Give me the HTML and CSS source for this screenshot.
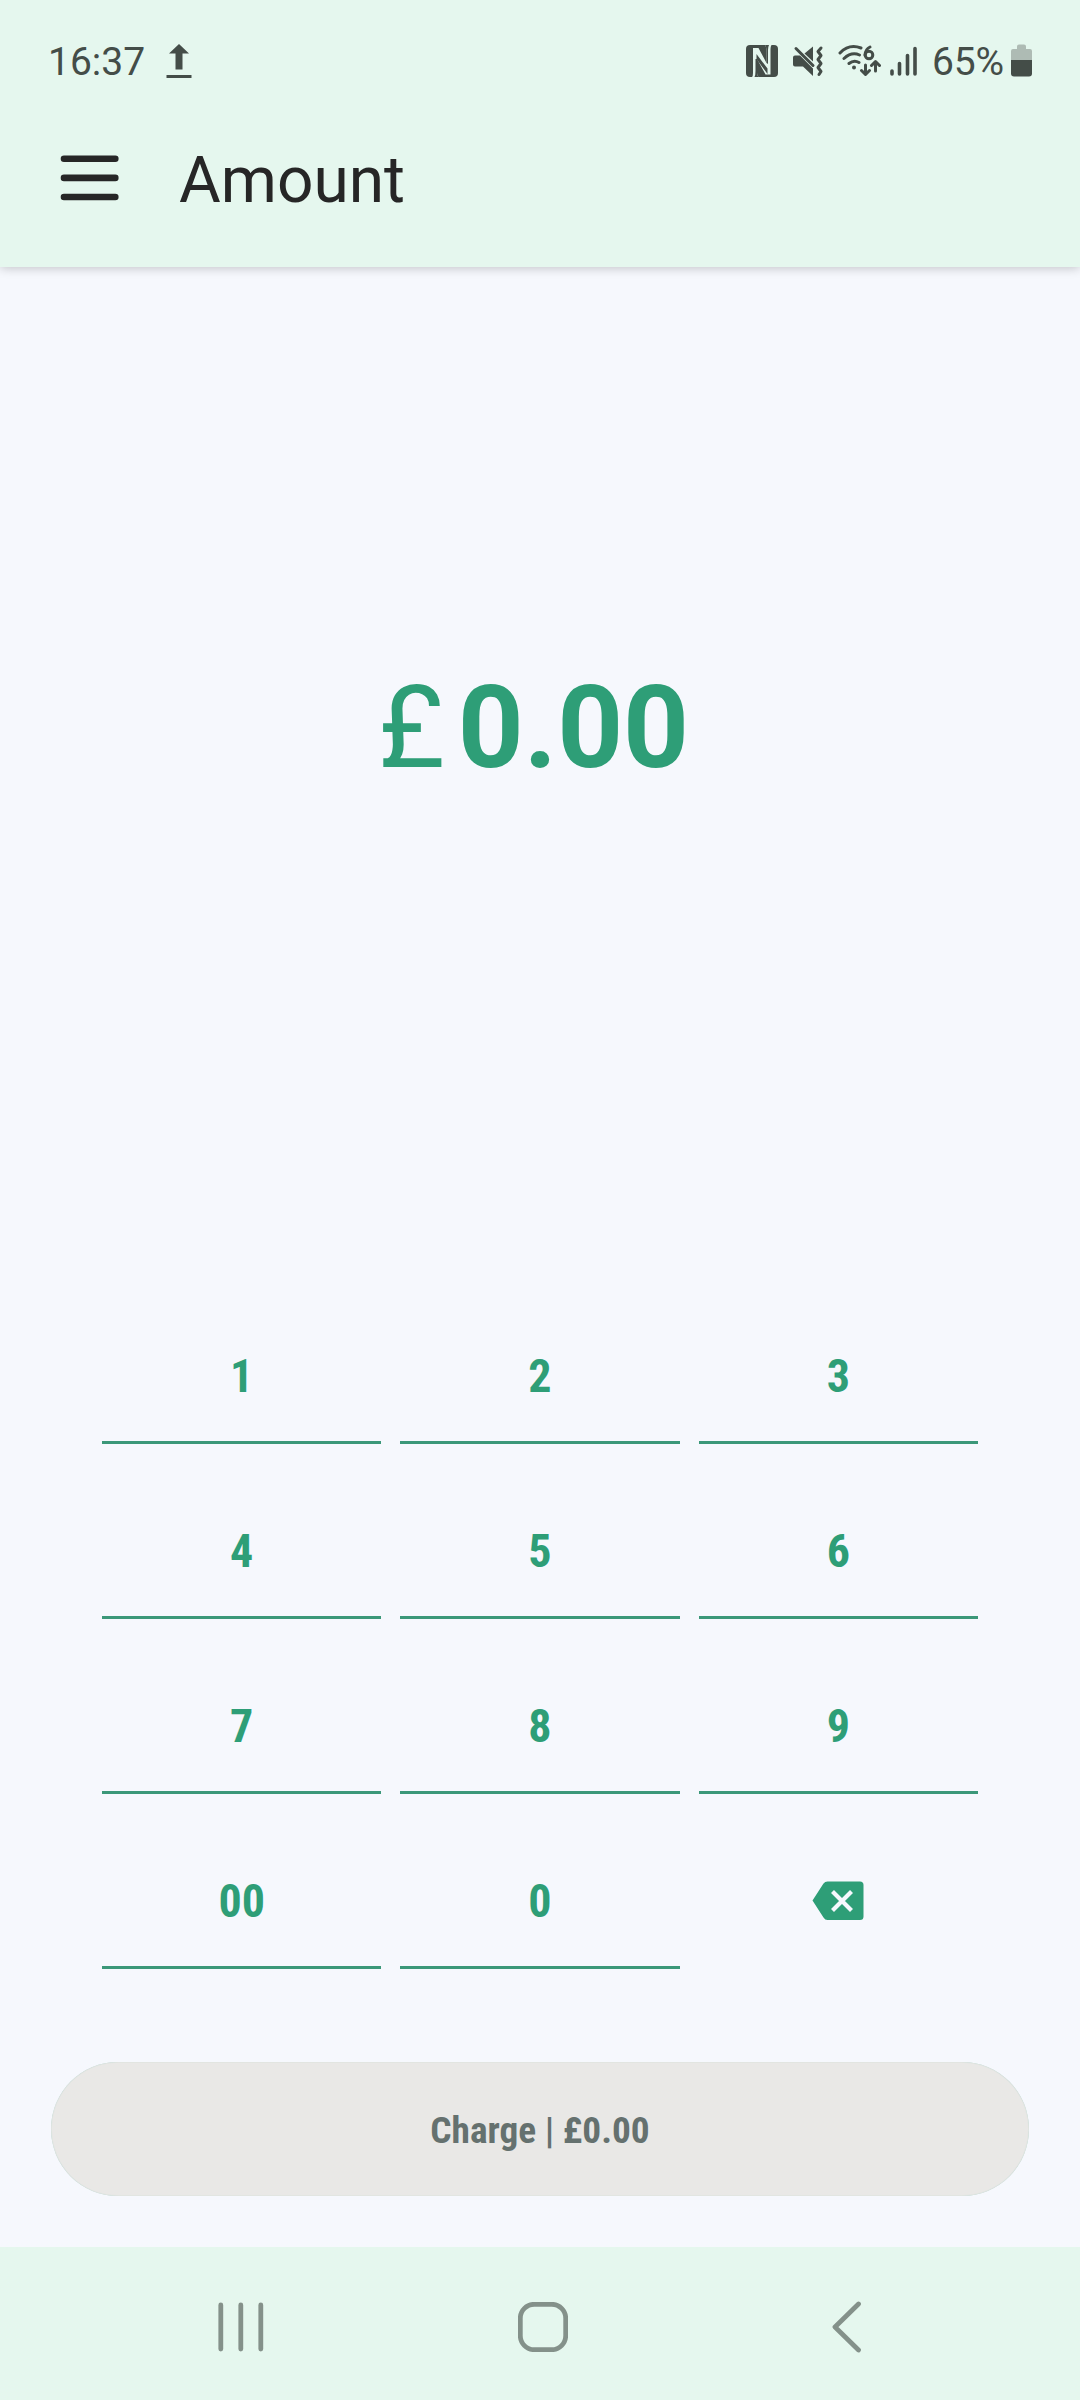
FILE: index.html
```html
<!DOCTYPE html>
<html lang="en">
<head>
<meta charset="utf-8">
<title>Amount</title>
<link rel="stylesheet" href="styles.css">
</head>
<body>
<div class="screen">
  <header class="top">
    <div class="status">
      <span class="time">16:37</span>
      <svg class="upload" width="26" height="36" viewBox="0 0 26 36"><path d="M13 1 23 10.500H16.500V26.500H9.500V10.500H3Z M0.500 32h25v3h-25z"/></svg>
      <svg class="nfc" width="32" height="32" viewBox="0 0 32 32"><rect width="32" height="32" rx="4"/><path d="M6 32Q7 31 7 28V3H12.500L20.500 18V5Q20.500 2 19 0H25.500Q24.500 1.500 24.500 4V29.500H19.500L11 14V28Q11 30.500 12.500 32Z" fill="#e5f7ee"/><path d="M10.500 9 21.500 23.500V29L10.500 14ZM8.500 32Q9.500 30 9.500 26V14H11V28Q11 30.500 12.500 32ZM19 0Q20.500 2 20.500 5V18L22 19V5Q22 2 23 0Z"/></svg>
      <svg class="mute" width="31" height="32" viewBox="0 0 31 32"><path d="M0 12.500Q0 10.500 2 10.500H7L20 23.500V31L10 21.500H2Q0 21.500 0 19.500Z M11.500 8.500 20 1.500V16.500Z"/><path d="M3 3.500 20 20.500M28 3l-3 3.500 3 4-3 4 3 4-3 4 3 4-2 3" fill="none" stroke="#444d48" stroke-width="3" stroke-linecap="round" stroke-linejoin="round"/></svg>
      <svg class="wifi" width="43" height="34" viewBox="0 0 43 34"><g fill="none" stroke="#444d48" stroke-width="3" stroke-linecap="round" stroke-linejoin="round"><path d="M2 9Q11-.5 23 4M6 14.500Q13.500 7.500 21.500 11M11 19.500Q16 15.500 21 18.500"/><path d="M32 3Q27.500 5 27 11"/><circle cx="31" cy="11" r="3.800"/><path d="M27.500 21v9M23.500 26.500l4 4 4-4M37.500 27v-9M33.500 21.500l4-4 4 4"/></g><circle cx="16" cy="23.500" r="2"/></svg>
      <svg class="signal" width="28" height="30" viewBox="0 0 28 30"><path d="M2 25v3M9.500 17.500V28M17.500 9.500V28M25 2.500V28" fill="none" stroke="#444d48" stroke-width="3.600" stroke-linecap="round"/></svg>
      <span class="percent">65%</span>
      <svg class="battery" width="21" height="33" viewBox="0 0 21 33"><path d="M0 16V7Q0 5 2 5H6V2.500Q6 .5 8 .5h5q2 0 2 2V5h4q2 0 2 2v9Z" fill="#aebbb4"/><path d="M0 16h21v13.500q0 3-3 3H3q-3 0-3-3Z"/></svg>
    </div>
    <div class="appbar">
      <svg class="menu" width="60" height="46" viewBox="0 0 60 46"><path d="M4 3.800H55.300M4 22.900H55.300M4 42H55.300" fill="none" stroke="#262626" stroke-width="6.600" stroke-linecap="round"/></svg>
      <h1 class="title">Amount</h1>
    </div>
  </header>
  <main class="main">
    <div class="amount"><span class="currency">£</span><span class="value">0.00</span></div>
    <div class="keypad">
      <button class="key"><span>1</span></button><button class="key"><span>2</span></button><button class="key"><span>3</span></button>
      <button class="key"><span>4</span></button><button class="key"><span>5</span></button><button class="key"><span>6</span></button>
      <button class="key"><span>7</span></button><button class="key"><span>8</span></button><button class="key"><span>9</span></button>
      <button class="key"><span>00</span></button><button class="key"><span>0</span></button>
      <button class="key erase" aria-label="Delete"><svg width="52" height="39" viewBox="0 0 52 39"><path d="M.5 19.500 11.500 2.500Q13 .5 15.500 .5H48Q51.500 .5 51.500 4V35.500Q51.500 39 48 39H15.500Q13 39 11.500 36.500Z"/><path d="M20.500 10.500 39.500 29.500M39.500 10.500 20.500 29.500" stroke="#f6f8fd" stroke-width="4.200" fill="none"/></svg></button>
    </div>
    <button class="charge"><span>Charge | £0.00</span></button>
  </main>
  <nav class="nav">
    <svg width="46" height="50" viewBox="0 0 46 50"><path d="M2.800 3v44M22.800 3v44M42.800 3v44"/></svg>
    <svg class="home" width="50" height="50" viewBox="0 0 50 50"><rect x="2.300" y="2.300" width="45.400" height="45.400" rx="14"/></svg>
    <svg width="30" height="52" viewBox="0 0 30 52"><path d="M26.500 3 3 26 26.500 49"/></svg>
  </nav>
</div>
</body>
</html>
```
FILE: styles.css
```css
* { box-sizing: border-box; }
body { margin: 0; font-family: Roboto, sans-serif; }
button { border: 0; padding: 0; background: none; font: inherit; }
svg { display: block; flex: none; }
.screen { width: 1080px; height: 2400px; display: flex; flex-direction: column; background: #f6f8fd; }
.top { height: 267px; background: #e5f7ee; box-shadow: 0 1px 10px rgba(0, 0, 0, .22); }
.status { height: 120px; padding: 1px 48px 0; display: flex; align-items: center; color: #444d48; fill: #444d48; font-size: 39px; line-height: 46px; }
.time { width: 97px; padding-top: 2px; }
.upload { margin-left: 21px; }
.nfc { margin-left: auto; }
.mute { margin-left: 15px; }
.wifi { margin-left: 14px; }
.signal { margin-left: 9px; }
.percent { margin-left: 14px; padding-top: 2px; width: 72px; white-space: nowrap; letter-spacing: -.2px; }
.battery { margin-left: 7px; }
.appbar { display: flex; align-items: center; height: 116px; padding-left: 60px; }
.menu { margin-top: -1px; }
.title { margin: 0 0 0 59px; padding-top: 5px; font-size: 64px; line-height: 76px; font-weight: 400; color: #262626; }
.main { flex: 1; display: flex; flex-direction: column; }
.amount { height: 1046px; padding: 0 13px 125px 0; display: flex; align-items: center; justify-content: center; color: #2e9e77; font-size: 115px; line-height: 136px; }
.currency { margin-right: 13px; }
.value { font-weight: 700; }
.keypad { margin: 0 102px; display: grid; grid-template-columns: repeat(3, 1fr); grid-auto-rows: 131px; gap: 44px 19px; }
.key { display: flex; align-items: center; justify-content: center; padding-bottom: 3px; border-bottom: 3px solid #3b9879; color: #2e9e77; fill: #2e9e77; font: 700 46px/54px "Roboto Condensed", Roboto, sans-serif; font-stretch: 75%; }
.erase { border-color: transparent; }
.charge { margin: 93px 51px 0; height: 134px; padding-top: 1px; border-radius: 67px; background: #e9e8e6; box-shadow: inset 0 0 1px #9fc5b8; color: #65716f; font: 700 37.300px/44px "Roboto Condensed", Roboto, sans-serif; font-stretch: 75%; }
.nav { height: 153px; padding: 6px 218px 0 218px; display: flex; align-items: center; justify-content: space-between; background: #e5f7ee; fill: none; stroke: #84918a; stroke-width: 4.800px; stroke-linecap: round; stroke-linejoin: round; }
.home { margin-right: 10px; }
```
